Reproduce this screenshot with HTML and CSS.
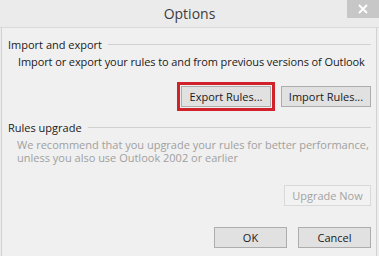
FILE: index.html
```html
<!DOCTYPE html>
<html>
<head>
<meta charset="utf-8">
<link rel="stylesheet" href="styles.css">
</head>
<body>
<div class="window">
  <div class="titlebar">
    <div class="title">Options</div>
    <div class="close">
      <svg width="10" height="10" viewBox="0 0 10 10"><path d="M1 1L9 9M9 1L1 9" stroke="#fff" stroke-width="1.8"/></svg>
    </div>
  </div>
  <div class="body">
    <div class="group-head"><span>Import and export</span><span class="rule"></span></div>
    <div class="desc">Import or export your rules to and from previous versions of Outlook</div>
    <div class="btn-row first">
      <span class="highlight"><button class="btn w90">Export Rules...</button></span>
      <button class="btn w90">Import Rules...</button>
    </div>
    <div class="group-head second"><span>Rules upgrade</span><span class="rule"></span></div>
    <div class="desc gray">We recommend that you upgrade your rules for better performance, unless you also use Outlook 2002 or earlier</div>
    <div class="btn-row upgrade">
      <button class="btn disabled w87">Upgrade Now</button>
    </div>
    <div class="btn-row footer">
      <button class="btn w73">OK</button>
      <button class="btn w73">Cancel</button>
    </div>
  </div>
</div>
</body>
</html>
```
FILE: styles.css
```css
html, body {
  margin: 0;
  padding: 0;
}
body {
  width: 379px;
  height: 256px;
  overflow: hidden;
  background: #f0f0f0;
  font-family: "Open Sans", "Noto Sans", sans-serif;
  color: #1a1a1a;
}
.window {
  width: 379px;
  height: 256px;
  display: flex;
  flex-direction: column;
  background: #ececec;
}
.titlebar {
  height: 27px;
  display: flex;
  flex-shrink: 0;
  border-bottom: 1px solid #dadada;
  background: #ebebeb;
}
.title {
  flex: 1;
  padding-left: 32px;
  text-align: center;
  font-size: 14px;
  line-height: 27px;
  color: #3c3c3c;
}
.close {
  width: 32px;
  height: 18px;
  background: #c7c7c7;
  display: flex;
  align-items: center;
  justify-content: center;
}
.body {
  flex: 1;
  margin-left: 1px;
  margin-right: 2px;
  border-left: 1px solid #d2d2d2;
  border-right: 1px solid #d2d2d2;
  background: #f0f0f0;
  padding: 9px 5px 0 6px;
  display: flex;
  flex-direction: column;
  font-size: 11px;
}
.group-head {
  display: flex;
  align-items: center;
  line-height: 16px;
  height: 16px;
}
.group-head .rule {
  flex: 1;
  height: 1px;
  background: #d0d0d0;
  margin-left: 6px;
  margin-top: -2px;
}
.group-head.second {
  margin-top: 9px;
}
.desc {
  padding-left: 10px;
  line-height: 16px;
  margin-top: 1px;
  white-space: nowrap;
  letter-spacing: -0.1px;
}
.desc.gray {
  color: #a0a0a0;
  line-height: 13px;
  padding-left: 9px;
  margin-top: 2px;
  white-space: normal;
  letter-spacing: 0;
}
.btn-row {
  display: flex;
  justify-content: flex-end;
  align-items: center;
  gap: 6px;
}
.btn-row.first {
  margin-top: 12px;
}
.btn-row.upgrade {
  margin-top: 21px;
}
.btn-row.footer {
  margin-top: 21px;
  gap: 11px;
}
.highlight {
  display: flex;
  border: 3px solid #d1212b;
  padding: 1px;
}
.btn {
  height: 21px;
  box-sizing: border-box;
  border: 1px solid #adadad;
  background: #e1e1e1;
  font-family: "Open Sans", "Noto Sans", sans-serif;
  font-size: 11px;
  color: #1a1a1a;
  padding: 0;
  margin: 0;
  line-height: 19px;
}
.btn.disabled {
  border-color: #d9d9d9;
  background: #f2f2f2;
  color: #a3a3a3;
}
.w90 { width: 90px; }
.w87 { width: 87px; }
.w73 { width: 73px; }
```
